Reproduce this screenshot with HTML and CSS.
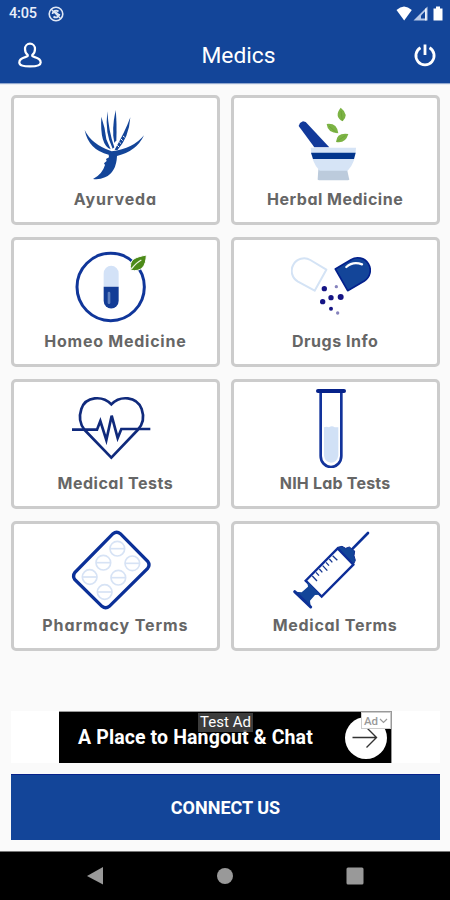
FILE: index.html
```html
<!DOCTYPE html>
<html lang="en">
<head>
<meta charset="UTF-8" />
<meta name="viewport" content="width=device-width, initial-scale=1.0">
<title>Medics</title>
<link rel="stylesheet" href="styles.css">
</head>
<body>
<div class="status-bar">
  <span class="time">4:05</span>
  <svg class="status-app" viewBox="0 0 16 16"><circle cx="8" cy="8" r="6.8" fill="none" stroke="#dfe7f5" stroke-width="1.6"/><path d="M4.500 8a3.600 3.600 0 0 1 6-2.500M11.500 8a3.600 3.600 0 0 1-6 2.500M6 5l5.500 4.500" fill="none" stroke="#dfe7f5" stroke-width="1.700"/><path d="M3 3l10 10" stroke="#dfe7f5" stroke-width="1.200"/></svg>
  <svg class="status-right" viewBox="0 0 48 16">
    <path d="M0.500 4Q8-3 15.800 4L8.200 14.500z" fill="#fff"/>
    <path d="M17.500 14.500L31.500 0.500v14z" fill="#b9cae8"/>
    <path d="M25 12.500V9.500l4-4v7z" fill="#134599"/>
    <path d="M29.800 2.500v12" stroke="#fff" stroke-width="1.200"/>
    <path d="M37.500 2.500h2.500V.5h4v2h2.500v12h-9z" fill="#fff"/>
  </svg>
</div>

<div class="header">
  <button class="icon-btn"><svg width="24" height="27" viewBox="0 0 24 27"><path d="M9.700 12.800C7.600 11.300 7 9.300 7 7A5 5.300 0 0 1 17 7c0 2.300-.6 4.300-2.700 5.800-.5 1.200.2 1.700 2.400 2.300 3.500 1 6 2.800 6 5.300 0 3-4 4-10.700 4s-10.700-1-10.700-4c0-2.500 2.500-4.300 6-5.300 2.200-.6 2.900-1.100 2.400-2.300z" fill="none" stroke="#fff" stroke-width="2.200" stroke-linejoin="round"/></svg></button>
  <h1>Medics</h1>
  <button class="icon-btn"><svg width="24" height="24" viewBox="0 0 24 24"><path d="M7.500 4.800a9.100 9.100 0 1 0 9 0M12 1.500v10.500" fill="none" stroke="#fff" stroke-width="2.800"/></svg></button>
</div>

<div class="menu">
  <div class="card">
    <svg viewBox="198 42 240 240" fill="#134599">
      <path d="M239 120Q259 163 320 184Q385 176 417 136Q395 184 336 198Q334 247 300 262Q282 270 264 267Q292 253 300 225L297 220L305 213L303 207L312 202L311 194Q251 180 239 120z"/>
      <path d="M289 80Q301 115 304 148L317 178Q284 165 289 80z"/>
      <path d="M307 64Q311 125 328 172L323 176Q299 130 307 64z"/>
      <path d="M332 60Q336 100 334 151L328 159Q319 120 332 60z"/>
      <path d="M376 82Q372 142 337 181L329 179Q360 126 376 82z"/>
      <path d="M337 166l5 5M343 156l5 5M348 147l5 5M354 138l5 4" stroke="#fff" stroke-width="3"/>
    </svg>
    <p class="w-ayurveda">Ayurveda</p>
  </div>
  <div class="card">
    <svg viewBox="198 42 240 240">
      <path d="M221 108l4-9 9-5 8 2 71 76h-45z" fill="#12399a"/>
      <path d="M280 238h86l7 31-4 2h-87l-4-2z" fill="#bccbdc"/>
      <path d="M257 173h136q-1 44-25 69h-84q-24-23-27-69z" fill="#d6e4f6"/>
      <path d="M258 188h134l-5 19H264z" fill="#02358c"/>
      <g fill="#7cb344">
        <path d="M347 53q26 20 6 41q-27-14-6-41z"/>
        <path d="M305 102q31-4 35 28q-32-1-35-28z"/>
        <path d="M333 156q2-29 37-24q-9 30-37 24z"/>
      </g>
      <path d="M348 63l4 29M312 108l22 20M336 154l25-17" stroke="#689e34" stroke-width="2" fill="none"/>
    </svg>
    <p>Herbal Medicine</p>
  </div>
  <div class="card">
    <svg viewBox="198 42 240 240">
      <circle cx="317" cy="165" r="101" fill="none" stroke="#10369a" stroke-width="9"/>
      <path d="M378 115c-8-35 14-39 46-46-1 35-15 51-46 46z" fill="#4c8a18" stroke="#fff" stroke-width="3"/>
      <path d="M379 111q16-20 30-27" stroke="#e9f2dd" stroke-width="4" fill="none"/>
      <path d="M296 164v-39a22 23 0 0 1 45 0v39z" fill="#d3e2f7"/>
      <path d="M296 164h45v42a22 23 0 0 1-45 0z" fill="#123c96"/>
      <path d="M312 183v29" stroke="#5f80be" stroke-width="8" stroke-linecap="round"/>
    </svg>
    <p class="w-homeo">Homeo Medicine</p>
  </div>
  <div class="card">
    <svg viewBox="198 42 240 240">
      <path d="M304 113L269 176L219 149A36 36 0 0 1 256 84z" fill="#fff" stroke="#d4e3f5" stroke-width="6" stroke-linejoin="round"/>
      <path d="M331 111L378 83A37 37 0 0 1 418 147L368 176z" fill="#134599" stroke="#03208c" stroke-width="5" stroke-linejoin="round"/>
      <path d="M364 105q20-18 47-8" fill="none" stroke="#fff" stroke-width="7" stroke-linecap="round"/>
      <g fill="#151485">
        <circle cx="298" cy="170" r="8"/><circle cx="318" cy="197" r="8"/><circle cx="347" cy="195" r="9"/><circle cx="293" cy="209" r="8"/><circle cx="318" cy="230" r="6"/>
      </g>
      <g fill="#8683bd"><circle cx="334" cy="164" r="5"/><circle cx="338" cy="243" r="5"/></g>
    </svg>
    <p>Drugs Info</p>
  </div>
  <div class="card">
    <svg viewBox="198 42 240 240" fill="none" stroke="#102a7c">
      <path d="M319 91C293 64 242 66 229 105C221 129 225 151 239 168L319 251L398 168C414 151 418 128 410 105C395 66 345 64 319 91z" stroke-width="8"/>
      <path d="M201 167h75l10-26 18 57 16-73 18 67 11-27h87" stroke-width="8" stroke-linejoin="miter"/>
    </svg>
    <p>Medical Tests</p>
  </div>
  <div class="card">
    <svg viewBox="198 42 240 240">
      <path d="M297 160q8-4 15 0 9-7 17 0h11v85q-4 20-22 21-18-2-21-21z" fill="#d1e1f6"/>
      <path d="M287 56v190a31 33 0 0 0 62 0V56" fill="none" stroke="#12339b" stroke-width="8"/>
      <path d="M279 51h78" stroke="#06228a" stroke-width="12" stroke-linecap="round"/>
    </svg>
    <p class="w-lab">NIH Lab Tests</p>
  </div>
  <div class="card">
    <svg viewBox="198 42 240 240" fill="none">
      <path d="M324 53Q335 44 346 53L428 136Q436 147 428 157L313 271Q302 280 291 271L209 190Q202 180 210 169z" stroke="#0b3098" stroke-width="10"/>
      <g stroke="#d7e3f5" stroke-width="5">
        <circle cx="337" cy="98" r="22"/><path d="M315 98h44"/>
        <circle cx="295" cy="140" r="22"/><path d="M273 140h44"/>
        <circle cx="382" cy="142" r="22"/><path d="M360 142h44"/>
        <circle cx="254" cy="183" r="22"/><path d="M232 183h44"/>
        <circle cx="340" cy="185" r="22"/><path d="M318 185h44"/>
        <circle cx="299" cy="228" r="22"/><path d="M277 228h44"/>
      </g>
    </svg>
    <p class="w-pharmacy">Pharmacy Terms</p>
  </div>
  <div class="card">
    <svg viewBox="198 42 240 240">
      <path d="M429 51L383 98" stroke="#0b3098" stroke-width="8" stroke-linecap="round"/>
      <path d="M338 94l13-3 11 6 11-4 16 12-2 14 4 14-7 15z" fill="#134599" stroke="#102f91" stroke-width="3"/>
      <path d="M338 97L242 194L290 242L385 146z" fill="#fff" stroke="#0d2d98" stroke-width="7"/>
      <path d="M247 196l38 40-15 1-15 17 2 17-45-44 18 2 19-17z" fill="#134599"/>
      <path d="M209 227l48 46" stroke="#0d3196" stroke-width="9" stroke-linecap="round"/>
      <path d="M262 180l14 15M273 169l9 10M283 159l9 10M293 149l14 15M303 139l9 10M313 129l9 10M323 119l14 14" stroke="#17378f" stroke-width="4"/>
    </svg>
    <p class="w-terms">Medical Terms</p>
  </div>
</div>

<div class="banner">
  <div class="ad">
    <span class="ad-text">A Place to Hangout &amp; Chat</span>
    <svg class="ad-arrow" viewBox="0 0 42 42"><circle cx="21" cy="21" r="21" fill="#fff"/><path d="M7.500 20.500h24M21.500 10.500l10 10-10 10" fill="none" stroke="#333" stroke-width="1.400"/></svg>
    <span class="test-label">Test Ad</span>
    <span class="ad-choice">Ad<svg width="9" height="6" viewBox="0 0 9 6"><path d="M1 1l3.500 3.500L8 1" fill="none" stroke="#999" stroke-width="1.200"/></svg></span>
  </div>
</div>

<button class="connect">CONNECT US</button>

<div class="nav-bar">
  <svg width="18" height="20" viewBox="0 0 18 20"><path d="M1 10L17 1v17.500z" fill="#999"/></svg>
  <svg width="18" height="20" viewBox="0 0 18 20"><circle cx="9" cy="10" r="8" fill="#999"/></svg>
  <svg width="18" height="20" viewBox="0 0 18 20"><rect x="0.500" y="1.500" width="17" height="17" rx="1.500" fill="#999"/></svg>
</div>
</body>
</html>
```
FILE: styles.css
```css
* { box-sizing:border-box; }
body { margin:0; height:900px; font-family:Roboto,sans-serif; background:#fafafa; display:flex; flex-direction:column; overflow:hidden; }
button { border:none; padding:0; font-family:inherit; cursor:pointer; }
svg { display:block; flex:none; }

.status-bar { height:27px; background:#134599; color:#e8eefa; display:flex; align-items:center; padding:0 6px 0 9px; }
.time { font-size:14.5px; font-weight:500; letter-spacing:-0.2px; width:39px; }
.status-app { width:16px; height:16px; }
.status-right { width:48px; height:16px; margin-left:auto; }

.header { height:56px; background:#134599; color:#fff; display:flex; align-items:center; justify-content:space-between; padding:0 13px 0 18px; box-shadow:0 1px 1px rgba(19,69,153,0.45); }
.header h1 { margin:0 0 0 22px; font-size:22.8px; line-height:56px; font-weight:400; padding-top:2px; }
.icon-btn { background:none; }

.menu { display:grid; grid-template-columns:1fr 1fr; gap:12px 11px; padding:12px 10.5px 0 11px; }
.card { height:130px; background:#fff; border:3px solid #ccc; border-radius:5px; padding-top:6px; display:flex; flex-direction:column; align-items:center; }
.card svg { width:80px; height:80px; margin-right:9px; }
.card p { margin:0; line-height:31px; font-family:Inter,sans-serif; font-size:16px; font-weight:700; font-feature-settings:"cv11"; letter-spacing:0.5px; color:#666; white-space:nowrap; }
.card .w-ayurveda { letter-spacing:0.9px; }
.card .w-homeo { letter-spacing:0.75px; }
.card .w-lab { letter-spacing:0.2px; }
.card .w-pharmacy { letter-spacing:0.9px; }
.card .w-terms { letter-spacing:0.7px; }

.banner { height:52px; margin:60px 10px 0 11px; background:#fff; display:flex; justify-content:center; }
.ad { position:relative; width:333px; height:52px; background:#000; border-top:1px solid #999; border-right:1px solid #999; display:flex; align-items:center; justify-content:space-between; padding:0 4px 0 19px; color:#fff; }
.ad-text { font-size:19.5px; font-weight:700; letter-spacing:0.12px; }
.ad-arrow { width:42px; height:42px; }
.test-label { position:absolute; left:139px; top:1px; width:55px; height:19px; background:rgba(80,80,80,0.75); font-size:15px; line-height:19px; text-align:center; white-space:nowrap; }
.ad-choice { position:absolute; right:0; top:0; width:30px; height:17px; background:#fff; border:1px solid #ccc; color:#999; font-size:11.5px; font-weight:500; display:flex; align-items:center; justify-content:center; gap:1px; }

.connect { height:66px; margin:11px 10px 0 11px; background:#134599; border-top:1px solid #07228a; color:#fff; font-size:18px; font-weight:700; }

.nav-bar { margin-top:auto; height:49px; background:#000; border-top:1px solid #777; display:flex; justify-content:space-between; align-items:center; padding:0 86px; }
```
